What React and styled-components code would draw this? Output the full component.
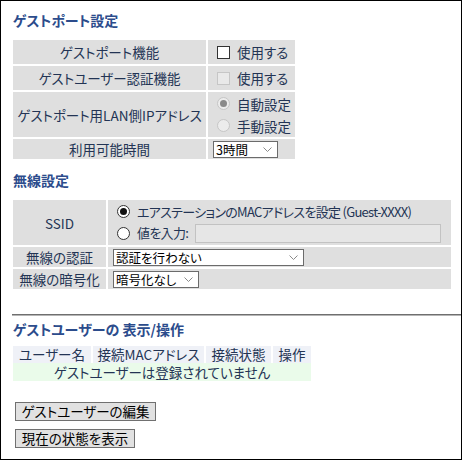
import styled, { createGlobalStyle } from "styled-components";

const GlobalStyle = createGlobalStyle`
  body {
    margin: 0;
    font-family: "Noto Sans CJK JP", "Noto Sans", sans-serif;
    font-size: 13.5px;
    color: #233454;
    font-feature-settings: "palt";
  }
`;

const Page = styled.div`
  display: flex;
  flex-direction: column;
  align-items: flex-start;
  width: 462px;
  height: 460px;
  box-sizing: border-box;
  border: 1px solid #000;
  background: #fff;
`;

const Heading = styled.h2`
  margin: ${(p) => p.$top}px 0 0 12px;
  font-size: 14px;
  line-height: 18px;
  font-weight: bold;
  color: #2c4c8c;
`;

const FormTable = styled.table`
  border-collapse: separate;
  border-spacing: 2px;
  margin: 9px 0 0 10px;
  table-layout: fixed;
  width: ${(p) => p.$width}px;
`;

const LabelCell = styled.td`
  width: ${(p) => (p.$w ? `${p.$w}px` : "auto")};
  height: ${(p) => p.$h}px;
  padding: 0;
  background: #dfdfdf;
  text-align: center;
  vertical-align: middle;
  line-height: 18px;
  white-space: nowrap;
`;

const ValueCell = styled.td`
  height: ${(p) => p.$h}px;
  padding: 0 0 0 5px;
  background: #dfdfdf;
  vertical-align: middle;
  line-height: 18px;
`;

const OptionLine = styled.div`
  display: flex;
  align-items: center;
  gap: 7px;
  height: ${(p) => p.$h || 22}px;
  white-space: nowrap;
`;

const Condensed = styled.span`
  font-size: 13px;
  letter-spacing: -0.7px;
`;

const Checkbox = styled.span`
  flex: none;
  width: 13px;
  height: 13px;
  box-sizing: border-box;
  margin-left: 4px;
  border: 1px solid ${(p) => (p.$disabled ? "#c6c6c6" : "#333")};
  background: ${(p) => (p.$disabled ? "#e9e9e9" : "#fff")};
`;

const Radio = styled.span`
  flex: none;
  position: relative;
  width: 13px;
  height: 13px;
  box-sizing: border-box;
  margin-left: 4px;
  border-radius: 50%;
  border: 1px solid ${(p) => (p.$disabled ? "#c6c6c6" : "#333")};
  background: ${(p) => (p.$disabled ? "#ececec" : "#fff")};

  &::after {
    content: "";
    display: ${(p) => (p.$checked ? "block" : "none")};
    position: absolute;
    left: 2px;
    top: 2px;
    width: 7px;
    height: 7px;
    border-radius: 50%;
    background: ${(p) => (p.$disabled ? "#8a8a8a" : "#111")};
  }
`;

const SelectBox = styled.div`
  display: flex;
  align-items: center;
  justify-content: space-between;
  width: ${(p) => p.$w}px;
  height: 17px;
  box-sizing: border-box;
  padding: 0 5px 0 2px;
  border: 1px solid #6b6b6b;
  background: #fff;
  color: #000;
  font-size: 12.5px;
  line-height: 15px;
  white-space: nowrap;
`;

const TextField = styled.div`
  flex: 1;
  min-width: 0;
  height: 19px;
  box-sizing: border-box;
  margin-right: 10px;
  border: 1px solid #c2c2c2;
  background: #e6e6e6;
`;

const Rule = styled.div`
  align-self: stretch;
  margin: 23px 0 0 11px;
  border-top: 1px solid #6f6f6f;
  border-bottom: 1px solid #b5b5b5;
`;

const ListTable = styled.table`
  border-collapse: separate;
  border-spacing: 2px 0;
  margin: 8px 0 0 10px;
  table-layout: fixed;
  width: 302px;
`;

const HeadCell = styled.th`
  width: ${(p) => p.$w}px;
  height: 17px;
  padding: 0;
  background: #eff1f7;
  font-weight: normal;
  text-align: center;
  line-height: 17px;
  white-space: nowrap;
`;

const EmptyCell = styled.td`
  height: 18px;
  padding: 0;
  background: #eafbea;
  text-align: center;
  line-height: 18px;
`;

const Button = styled.button`
  width: ${(p) => p.$w}px;
  height: 19px;
  margin: ${(p) => p.$top}px 0 0 14px;
  padding: 0;
  border: 1px solid #707070;
  background: #e1e1e1;
  color: #000;
  font-family: inherit;
  font-size: 13.5px;
  line-height: 17px;
  font-feature-settings: "palt";
`;

const Chevron = () => (
  <svg width="9" height="5" viewBox="0 0 9 5">
    <polyline points="0.5,0.5 4.5,4.5 8.5,0.5" fill="none" stroke="#8a8a8a" />
  </svg>
);

const Select = ({ width, children }) => (
  <SelectBox $w={width}>
    <span>{children}</span>
    <Chevron />
  </SelectBox>
);

export default function App() {
  return (
    <>
      <GlobalStyle />
      <Page>
        <Heading $top={10}>ゲストポート設定</Heading>
        <FormTable $width={286}>
          <tbody>
            <tr>
              <LabelCell $w={193} $h={24}>ゲストポート機能</LabelCell>
              <ValueCell $h={24}>
                <OptionLine>
                  <Checkbox />
                  使用する
                </OptionLine>
              </ValueCell>
            </tr>
            <tr>
              <LabelCell $h={24}>ゲストユーザー認証機能</LabelCell>
              <ValueCell $h={24}>
                <OptionLine>
                  <Checkbox $disabled />
                  使用する
                </OptionLine>
              </ValueCell>
            </tr>
            <tr>
              <LabelCell $h={45}>ゲストポート用LAN側IPアドレス</LabelCell>
              <ValueCell $h={45}>
                <OptionLine>
                  <Radio $disabled $checked />
                  自動設定
                </OptionLine>
                <OptionLine>
                  <Radio $disabled />
                  手動設定
                </OptionLine>
              </ValueCell>
            </tr>
            <tr>
              <LabelCell $h={20}>利用可能時間</LabelCell>
              <ValueCell $h={20}>
                <Select width={65}>3時間</Select>
              </ValueCell>
            </tr>
          </tbody>
        </FormTable>

        <Heading $top={10}>無線設定</Heading>
        <FormTable $width={442}>
          <tbody>
            <tr>
              <LabelCell $w={93} $h={45}>SSID</LabelCell>
              <ValueCell $h={45}>
                <OptionLine $h={21}>
                  <Radio $checked />
                  <Condensed>エアステーションのMACアドレスを設定 (Guest-XXXX)</Condensed>
                </OptionLine>
                <OptionLine $h={22}>
                  <Radio />
                  <Condensed>値を入力:</Condensed>
                  <TextField />
                </OptionLine>
              </ValueCell>
            </tr>
            <tr>
              <LabelCell $h={20}>無線の認証</LabelCell>
              <ValueCell $h={20}>
                <Select width={191}>認証を行わない</Select>
              </ValueCell>
            </tr>
            <tr>
              <LabelCell $h={20}>無線の暗号化</LabelCell>
              <ValueCell $h={20}>
                <Select width={86}>暗号化なし</Select>
              </ValueCell>
            </tr>
          </tbody>
        </FormTable>

        <Rule />

        <Heading $top={4}>ゲストユーザーの 表示/操作</Heading>
        <ListTable>
          <thead>
            <tr>
              <HeadCell $w={78}>ユーザー名</HeadCell>
              <HeadCell $w={111}>接続MACアドレス</HeadCell>
              <HeadCell $w={65}>接続状態</HeadCell>
              <HeadCell $w={38}>操作</HeadCell>
            </tr>
          </thead>
          <tbody>
            <tr>
              <EmptyCell colSpan={4}>ゲストユーザーは登録されていません</EmptyCell>
            </tr>
          </tbody>
        </ListTable>

        <Button $w={141} $top={21}>ゲストユーザーの編集</Button>
        <Button $w={120} $top={8}>現在の状態を表示</Button>
      </Page>
    </>
  );
}
